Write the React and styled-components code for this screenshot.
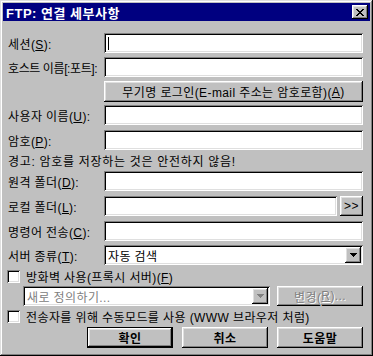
import React from 'react';
import styled, { createGlobalStyle } from 'styled-components';

const GlobalStyle = createGlobalStyle`
  html, body {
    margin: 0;
    padding: 0;
    background: #c0c0c0;
  }
  body {
    font-family: "Liberation Sans", "Noto Sans CJK KR", sans-serif;
    font-size: 12px;
    letter-spacing: 0.4px;
    color: #000;
  }
`;

const raised = `
  box-shadow: inset -1px -1px #000, inset 1px 1px #fff,
    inset -2px -2px #808080, inset 2px 2px #dfdfdf;
`;

const sunken = `
  box-shadow: inset 1px 1px #808080, inset -1px -1px #fff,
    inset 2px 2px #000, inset -2px -2px #dfdfdf;
`;

const Window = styled.div`
  width: 373px;
  height: 356px;
  box-sizing: border-box;
  padding: 3px;
  background: #c0c0c0;
  box-shadow: inset -1px -1px #000, inset 1px 1px #dfdfdf,
    inset -2px -2px #808080, inset 2px 2px #fff;
  display: flex;
  flex-direction: column;
`;

const TitleBar = styled.div`
  height: 18px;
  background: #000080;
  color: #fff;
  display: flex;
  align-items: center;
  justify-content: space-between;
  padding: 0 2px 0 3px;
  font-weight: bold;
  font-size: 13px;
  letter-spacing: 0.5px;
`;

const CloseButton = styled.div`
  width: 16px;
  height: 14px;
  background: #c0c0c0;
  display: flex;
  align-items: center;
  justify-content: center;
  ${raised}
`;

const Body = styled.div`
  padding: 12px 7px 0 4px;
  display: flex;
  flex-direction: column;
`;

const Row = styled.div`
  display: flex;
  align-items: center;
  height: ${(p) => p.$h || 20}px;
  margin-top: ${(p) => p.$mt || 0}px;
  padding-left: ${(p) => p.$indent || 0}px;
  gap: ${(p) => p.$gap || 0}px;
  justify-content: ${(p) => (p.$end ? 'flex-end' : 'flex-start')};
`;

const Label = styled.div`
  width: 97px;
  flex: none;
  padding-left: 1px;
  box-sizing: border-box;
  white-space: nowrap;
  letter-spacing: ${(p) => (p.$tight ? '-0.4px' : 'inherit')};
`;

const Note = styled.div`
  padding-left: 1px;
  white-space: nowrap;
  letter-spacing: 0.7px;
`;

const Field = styled.div`
  flex: 1;
  height: 20px;
  background: #fff;
  box-sizing: border-box;
  padding: 3px 4px;
  display: flex;
  align-items: center;
  ${sunken}
`;

const Caret = styled.span`
  width: 1px;
  height: 13px;
  background: #000;
`;

const Combo = styled(Field)`
  flex: ${(p) => (p.$w ? 'none' : 1)};
  width: ${(p) => (p.$w ? `${p.$w}px` : 'auto')};
  padding: 2px 2px 2px 4px;
  justify-content: space-between;
  color: ${(p) => (p.$disabled ? '#808080' : '#000')};
`;

const DropButton = styled.div`
  width: 16px;
  height: 16px;
  background: #c0c0c0;
  display: flex;
  align-items: center;
  justify-content: center;
  ${raised}
`;

const Button = styled.div`
  height: ${(p) => p.$h || 21}px;
  width: ${(p) => (p.$w ? `${p.$w}px` : 'auto')};
  flex: ${(p) => (p.$w ? 'none' : 1)};
  box-sizing: border-box;
  background: #c0c0c0;
  display: flex;
  align-items: center;
  justify-content: center;
  white-space: nowrap;
  font-weight: ${(p) => (p.$bold ? 'bold' : 'normal')};
  color: ${(p) => (p.$disabled ? '#808080' : '#000')};
  text-shadow: ${(p) => (p.$disabled ? '1px 1px #fff' : 'none')};
  margin-left: ${(p) => p.$ml || 0}px;
  ${raised}
  ${(p) =>
    p.$default &&
    `box-shadow: inset 0 0 0 1px #000, inset -2px -2px #000, inset 2px 2px #fff,
      inset -3px -3px #808080, inset 3px 3px #dfdfdf;`}
`;

const Check = styled.div`
  width: 13px;
  height: 13px;
  flex: none;
  background: #fff;
  box-sizing: border-box;
  ${sunken}
`;

const CheckText = styled.span`
  margin-left: 6px;
  white-space: nowrap;
`;

const Arrow = ({ color = '#000' }) => (
  <svg width="7" height="4" viewBox="0 0 7 4" shapeRendering="crispEdges">
    <path d="M0 0h7v1H0zM1 1h5v1H1zM2 2h3v1H2zM3 3h1v1H3z" fill={color} />
  </svg>
);

const CloseGlyph = () => (
  <svg width="8" height="7" viewBox="0 0 8 7" shapeRendering="crispEdges">
    <path
      d="M0 0h2v1H0zM6 0h2v1H6zM1 1h2v1H1zM5 1h2v1H5zM2 2h4v1H2zM3 3h2v1H3zM2 4h4v1H2zM1 5h2v1H1zM5 5h2v1H5zM0 6h2v1H0zM6 6h2v1H6z"
      fill="#000"
    />
  </svg>
);

const App = () => {
  return (
    <>
      <GlobalStyle />
      <Window>
        <TitleBar>
          <span>FTP: 연결 세부사항</span>
          <CloseButton>
            <CloseGlyph />
          </CloseButton>
        </TitleBar>
        <Body>
          <Row>
            <Label>세션(<u>S</u>):</Label>
            <Field><Caret /></Field>
          </Row>
          <Row $mt={4}>
            <Label $tight>호스트 이름[:포트]:</Label>
            <Field />
          </Row>
          <Row $mt={4} $h={21}>
            <Label />
            <Button>무기명 로그인(E-mail 주소는 암호로함)(<u>A</u>)</Button>
          </Row>
          <Row $mt={3}>
            <Label>사용자 이름(<u>U</u>):</Label>
            <Field />
          </Row>
          <Row $mt={5}>
            <Label>암호(<u>P</u>):</Label>
            <Field />
          </Row>
          <Row $mt={2} $h={17}>
            <Note>경고: 암호를 저장하는 것은 안전하지 않음!</Note>
          </Row>
          <Row $mt={2}>
            <Label>원격 폴더(<u>D</u>):</Label>
            <Field />
          </Row>
          <Row $mt={5}>
            <Label>로컬 폴더(<u>L</u>):</Label>
            <Field />
            <Button $w={23} $h={20} $ml={3}>&gt;&gt;</Button>
          </Row>
          <Row $mt={5}>
            <Label>명령어 전송(<u>C</u>):</Label>
            <Field />
          </Row>
          <Row $mt={4}>
            <Label>서버 종류(<u>T</u>):</Label>
            <Combo>
              <span>자동 검색</span>
              <DropButton><Arrow /></DropButton>
            </Combo>
          </Row>
          <Row $mt={3} $h={17}>
            <Check />
            <CheckText>방화벽 사용(프록시 서버)(<u>F</u>)</CheckText>
          </Row>
          <Row $mt={1} $indent={16} $gap={7}>
            <Combo $w={247} $disabled>
              <span>새로 정의하기...</span>
              <DropButton><Arrow color="#808080" /></DropButton>
            </Combo>
            <Button $w={86} $h={20} $disabled>변경(<u>R</u>)...</Button>
          </Row>
          <Row $mt={2} $h={17}>
            <Check />
            <CheckText>전송자를 위해 수동모드를 사용 (WWW 브라우저 처럼)</CheckText>
          </Row>
          <Row $mt={2} $end $gap={9}>
            <Button $w={86} $bold $default>확인</Button>
            <Button $w={86} $bold>취소</Button>
            <Button $w={86} $bold>도움말</Button>
          </Row>
        </Body>
      </Window>
    </>
  );
};

export default App;
